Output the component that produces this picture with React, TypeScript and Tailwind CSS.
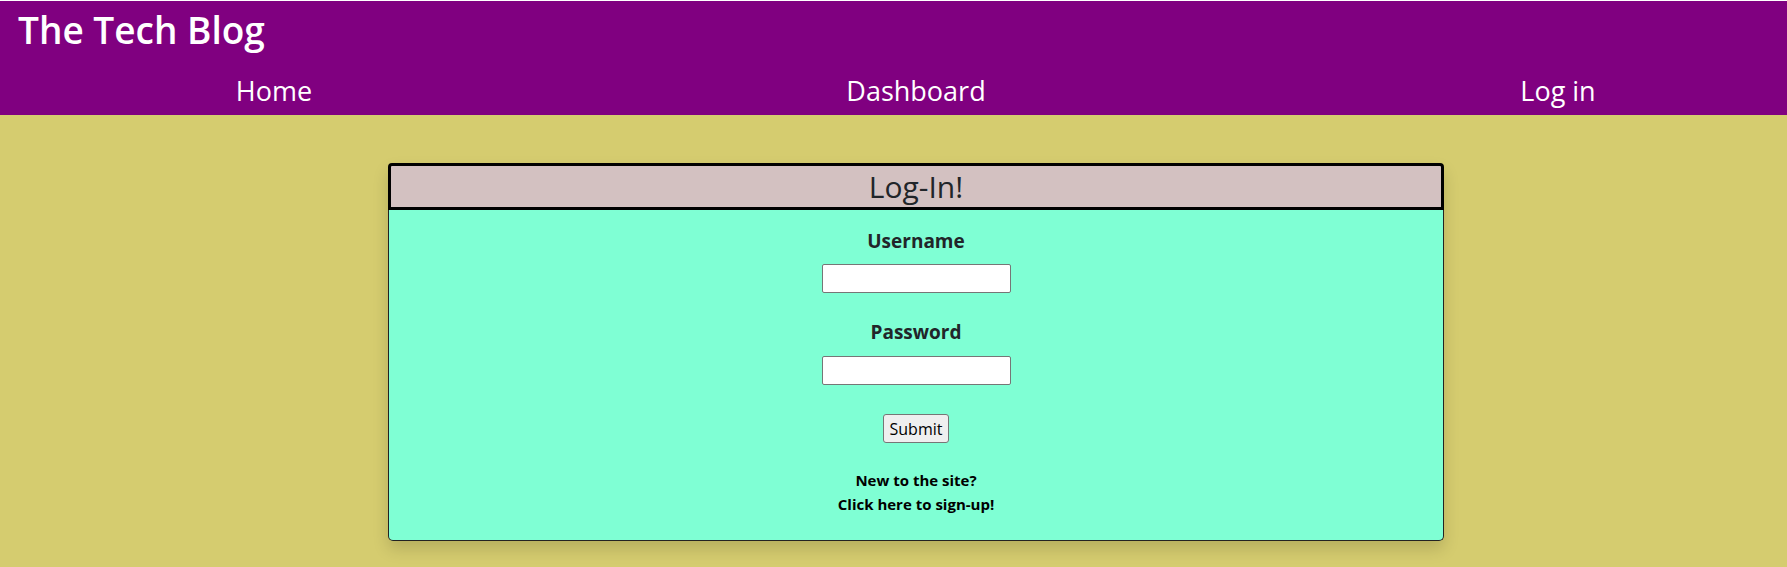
export default function App() {
  return (
    <div className="min-h-[567px] bg-[#d5cc6f] font-['Open_Sans',sans-serif]">
      {/* Top bar */}
      <header className="border-t border-white bg-[#800080] text-white">
        <h1 className="pl-[18px] pt-[5px] text-[37px] font-semibold leading-[48px]">The Tech Blog</h1>
        <nav className="mt-[20px] ml-[174px] flex gap-[442px] pb-[7px] text-[27px] leading-[34px]">
          <a className="w-[200px] text-center">Home</a>
          <a className="w-[200px] text-center">Dashboard</a>
          <a className="w-[200px] text-center">Log in</a>
        </nav>
      </header>

      <main className="pt-[48px] pl-[388px] pb-[26px]">
        <section className="flex w-[1056px] flex-col rounded-[5px] shadow-[0_8px_16px_rgba(0,0,0,0.15)]">
          <div className="flex h-[47px] items-center justify-center rounded-t-[4px] border-[3px] border-black bg-[#d3c1c1]">
            <h2 className="text-[30px] leading-[41px] text-[#212529]">Log-In!</h2>
          </div>

          <form className="flex flex-col items-center rounded-b-[5px] border-x border-b border-[#222] bg-[#7fffd4] pt-[19px] pb-[24px]">
            <label className="text-[19px] font-bold leading-[24px] text-[#212529]">Username</label>
            <input type="text" className="mt-[11px] h-[29px] w-[189px] rounded-[2px] border border-[#767676] bg-white" />

            <label className="mt-[27px] text-[19px] font-bold leading-[24px] text-[#212529]">Password</label>
            <input type="password" className="mt-[12px] h-[29px] w-[189px] rounded-[2px] border border-[#767676] bg-white" />

            <button type="button" className="mt-[29px] h-[29px] rounded-[3px] border border-[#767676] bg-[#efefef] px-[6px] text-[16px] leading-[20px] text-black">
              Submit
            </button>

            <div className="mt-[25px] text-center text-[15px] font-bold leading-[24px] text-black">
              <p>New to the site?</p>
              <p>Click here to sign-up!</p>
            </div>
          </form>
        </section>
      </main>
    </div>
  );
}
